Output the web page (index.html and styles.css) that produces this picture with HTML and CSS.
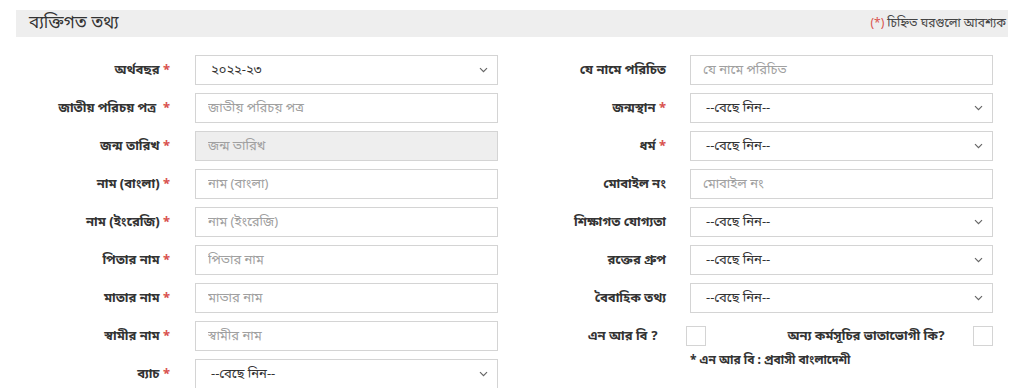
FILE: index.html
```html
<!DOCTYPE html>
<html lang="bn">
<head>
<meta charset="utf-8">
<title>ব্যক্তিগত তথ্য</title>
<link rel="stylesheet" href="styles.css">
</head>
<body>
<div class="page">
  <div class="section-head">
    <h3 class="section-title">ব্যক্তিগত তথ্য</h3>
    <span class="required-note"><span class="req-mark">(*)</span> চিহ্নিত ঘরগুলো আবশ্যক</span>
  </div>

  <div class="form">
    <div class="col">
      <div class="row">
        <label class="lbl">অর্থবছর <span class="star">*</span></label>
        <div class="ctl select"><span class="val">২০২২-২৩</span><svg class="chev" width="9" height="6" viewBox="0 0 9 6"><path d="M1 1.2l3.5 3.5 3.5-3.5" fill="none" stroke="#666" stroke-width="1.2"/></svg></div>
      </div>
      <div class="row">
        <label class="lbl">জাতীয় পরিচয় পত্র &nbsp;<span class="star">*</span></label>
        <input class="ctl" type="text" placeholder="জাতীয় পরিচয় পত্র">
      </div>
      <div class="row">
        <label class="lbl">জন্ম তারিখ <span class="star">*</span></label>
        <input class="ctl disabled" type="text" placeholder="জন্ম তারিখ" disabled>
      </div>
      <div class="row">
        <label class="lbl">নাম (বাংলা) <span class="star">*</span></label>
        <input class="ctl" type="text" placeholder="নাম (বাংলা)">
      </div>
      <div class="row">
        <label class="lbl">নাম (ইংরেজি) <span class="star">*</span></label>
        <input class="ctl" type="text" placeholder="নাম (ইংরেজি)">
      </div>
      <div class="row">
        <label class="lbl">পিতার নাম <span class="star">*</span></label>
        <input class="ctl" type="text" placeholder="পিতার নাম">
      </div>
      <div class="row">
        <label class="lbl">মাতার নাম <span class="star">*</span></label>
        <input class="ctl" type="text" placeholder="মাতার নাম">
      </div>
      <div class="row">
        <label class="lbl">স্বামীর নাম <span class="star">*</span></label>
        <input class="ctl" type="text" placeholder="স্বামীর নাম">
      </div>
      <div class="row">
        <label class="lbl">ব্যাচ <span class="star">*</span></label>
        <div class="ctl select"><span class="val">--বেছে নিন--</span><svg class="chev" width="9" height="6" viewBox="0 0 9 6"><path d="M1 1.2l3.5 3.5 3.5-3.5" fill="none" stroke="#666" stroke-width="1.2"/></svg></div>
      </div>
    </div>

    <div class="col">
      <div class="row">
        <label class="lbl">যে নামে পরিচিত</label>
        <input class="ctl" type="text" placeholder="যে নামে পরিচিত">
      </div>
      <div class="row">
        <label class="lbl">জন্মস্থান <span class="star">*</span></label>
        <div class="ctl select"><span class="val">--বেছে নিন--</span><svg class="chev" width="9" height="6" viewBox="0 0 9 6"><path d="M1 1.2l3.5 3.5 3.5-3.5" fill="none" stroke="#666" stroke-width="1.2"/></svg></div>
      </div>
      <div class="row">
        <label class="lbl">ধর্ম <span class="star">*</span></label>
        <div class="ctl select"><span class="val">--বেছে নিন--</span><svg class="chev" width="9" height="6" viewBox="0 0 9 6"><path d="M1 1.2l3.5 3.5 3.5-3.5" fill="none" stroke="#666" stroke-width="1.2"/></svg></div>
      </div>
      <div class="row">
        <label class="lbl">মোবাইল নং</label>
        <input class="ctl" type="text" placeholder="মোবাইল নং">
      </div>
      <div class="row">
        <label class="lbl">শিক্ষাগত যোগ্যতা</label>
        <div class="ctl select"><span class="val">--বেছে নিন--</span><svg class="chev" width="9" height="6" viewBox="0 0 9 6"><path d="M1 1.2l3.5 3.5 3.5-3.5" fill="none" stroke="#666" stroke-width="1.2"/></svg></div>
      </div>
      <div class="row">
        <label class="lbl">রক্তের গ্রুপ</label>
        <div class="ctl select"><span class="val">--বেছে নিন--</span><svg class="chev" width="9" height="6" viewBox="0 0 9 6"><path d="M1 1.2l3.5 3.5 3.5-3.5" fill="none" stroke="#666" stroke-width="1.2"/></svg></div>
      </div>
      <div class="row">
        <label class="lbl">বৈবাহিক তথ্য</label>
        <div class="ctl select"><span class="val">--বেছে নিন--</span><svg class="chev" width="9" height="6" viewBox="0 0 9 6"><path d="M1 1.2l3.5 3.5 3.5-3.5" fill="none" stroke="#666" stroke-width="1.2"/></svg></div>
      </div>
      <div class="row check-row">
        <label class="lbl lbl-nrb">এন আর বি ?</label>
        <div class="check-line">
          <span class="box"></span>
          <span class="check-label">অন্য কর্মসূচির ভাতাভোগী কি?</span>
          <span class="box"></span>
        </div>
      </div>
      <div class="row note-row">
        <span></span>
        <p class="note">* এন আর বি : প্রবাসী বাংলাদেশী</p>
      </div>
    </div>
  </div>
</div>
</body>
</html>
```

FILE: styles.css
```css
* { box-sizing: border-box; }

html, body {
  margin: 0;
  padding: 0;
  background: #ffffff;
}

body {
  font-family: "Noto Sans Bengali", "Lohit Bengali", "Noto Sans", "DejaVu Sans", sans-serif;
  color: #333333;
  font-size: 13px;
  overflow: hidden;
  height: 388px;
}

.page {
  padding: 10px 16px 0 16px;
}

.section-head {
  display: flex;
  align-items: center;
  justify-content: space-between;
  height: 27px;
  background: #eeeeee;
  padding: 0 2px 0 13px;
}

.section-title {
  margin: 0;
  font-size: 17px;
  font-weight: normal;
  color: #333333;
}

.required-note {
  font-size: 12px;
  color: #444444;
}

.req-mark { color: #d9534f; }

.form {
  display: grid;
  grid-template-columns: 496px 496px;
  margin-top: 18px;
}

.col {
  display: flex;
  flex-direction: column;
  gap: 8px;
  padding-right: 14px;
}

.row {
  display: grid;
  grid-template-columns: 154px 1fr;
  column-gap: 25px;
  align-items: center;
  height: 30px;
}

.col + .col .row { column-gap: 24px; padding-right: 1px; }

.lbl {
  text-align: right;
  font-weight: bold;
  font-size: 13px;
  color: #333333;
  white-space: nowrap;
}

.star { color: #d9534f; }

.ctl {
  display: block;
  width: 100%;
  height: 30px;
  border: 1px solid #d4d4d4;
  background: #ffffff;
  font-family: inherit;
  font-size: 13px;
  color: #333333;
  padding: 0 12px;
  outline: none;
}

.ctl::placeholder { color: #a0a0a0; }

.ctl.disabled { background: #eeeeee; }

.select {
  display: flex;
  align-items: center;
  justify-content: space-between;
  padding: 0 9px 0 15px;
}

.select .val { color: #333333; }

.chev { flex: none; }

.lbl-nrb { padding-right: 8px; }

.check-line {
  display: flex;
  align-items: center;
  margin-left: -4px;
}

.box {
  width: 20px;
  height: 20px;
  border: 1px solid #d4d4d4;
  background: #ffffff;
  flex: none;
}

.check-label {
  margin-left: auto;
  margin-right: 28px;
  font-weight: bold;
  font-size: 13px;
}

.note-row {
  height: 16px;
  margin-top: -6px;
}

.note {
  margin: 0;
  font-weight: bold;
  font-size: 12px;
  color: #333333;
}
```
